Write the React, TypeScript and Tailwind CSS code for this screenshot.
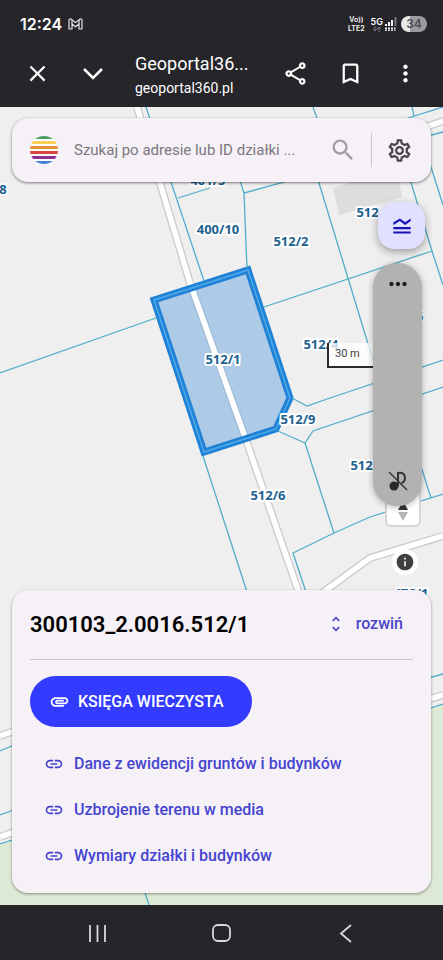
import { useState } from 'react';
import {
  MdAttachment,
  MdBookmarkBorder,
  MdClose,
  MdInfo,
  MdLegendToggle,
  MdLink,
  MdMoreHoriz,
  MdMoreVert,
  MdOutlineSettings,
  MdOutlineShare,
  MdSearch,
  MdUnfoldMore,
} from 'react-icons/md';

const boundaries = [
  '146,107 204,281',
  '178,198 210,188',
  '236,168 244,193 247,268',
  '244,193 281,183 318,171',
  '313,107 318,121 316,175 319,183 344,265 372,357 400,400 431,498',
  '412,107 414,116',
  '405,119 443,107',
  '428,136 443,132',
  '425,148 443,205',
  '405,163 432,251 443,285',
  '432,251 264,307',
  '0,373 156,318',
  '292,398 307,406 330,398 443,360',
  '278,431 305,443 313,431 443,387',
  '305,443 334,533',
  '306,592 293,553 334,533 370,517 443,494',
  '203,456 247,592',
  '425,679 443,674',
  '0,751 14,745',
  '0,815 14,810',
  '0,844 443,704',
  '144,890 149,905',
];

const roads = [
  '137,107 160,183 190,283 245,437 299,593',
  '322,593 370,558 443,536',
  '420,129 443,121',
  '0,736 14,731',
  '0,837 200,768 443,695',
];

const labels = [
  { text: '401/5', x: 208, y: 185 },
  { text: '400/10', x: 218, y: 234 },
  { text: '512/2', x: 291, y: 246 },
  { text: '512/3', x: 374, y: 217 },
  { text: '512/4', x: 321, y: 349 },
  { text: '512/1', x: 223, y: 364 },
  { text: '512/9', x: 298, y: 424 },
  { text: '512/5', x: 406, y: 321 },
  { text: '512/7', x: 368, y: 470 },
  { text: '512/6', x: 268, y: 500 },
  { text: '476/1', x: 411, y: 598 },
  { text: '8', x: 3, y: 194 },
];

const stripes = [
  { color: '#4a9d63', y: 0, h: 3 },
  { color: '#f6d154', y: 5, h: 3 },
  { color: '#e8913a', y: 10, h: 3 },
  { color: '#d94840', y: 15, h: 3 },
  { color: '#8e3296', y: 20, h: 3 },
  { color: '#4184d6', y: 25, h: 3 },
];

const links = [
  'Dane z ewidencji gruntów i budynków',
  'Uzbrojenie terenu w media',
  'Wymiary działki i budynków',
];

const ParcelMap = () => (
  <svg
    viewBox="0 107 443 798"
    preserveAspectRatio="xMidYMid slice"
    className="absolute inset-0 h-full w-full"
    aria-label="Mapa działek"
  >
    <rect x="-500" y="-500" width="2000" height="2000" fill="#efefef" />
    <polygon points="0,845 443,705 443,905 0,905" fill="#dde9d5" />
    <polygon points="333,188 396,168 402,197 339,215" fill="#dfdddb" />

    <g fill="none">
      {roads.map((points) => (
        <polyline key={points} points={points} stroke="#c9c9c9" strokeWidth="8" />
      ))}
      {roads.map((points) => (
        <polyline key={points} points={points} stroke="#ffffff" strokeWidth="5.500" />
      ))}
    </g>

    {/* selected parcel */}
    <polygon
      points="154,300 248,270 290,398 276,429 204,452"
      fill="#76acdf"
      fillOpacity="0.55"
    />
    <polyline points="190,283 245,437" fill="none" stroke="#ffffff" strokeWidth="5.500" />
    <polygon
      points="154,300 248,270 290,398 276,429 204,452"
      fill="none"
      stroke="#1f82d6"
      strokeWidth="7"
    />
    <g fill="none" stroke="#51aec9" strokeWidth="1.300">
      {boundaries.map((points) => (
        <polyline key={points} points={points} />
      ))}
      <polygon points="154,300 248,270 290,398 276,429 204,452" stroke="#4fa9ea" strokeWidth="1.500" />
    </g>

    <g
      fill="#21628f"
      stroke="#ffffff"
      strokeWidth="4"
      strokeLinejoin="round"
      paintOrder="stroke"
      textAnchor="middle"
      className="font-['Open_Sans',sans-serif] text-[13px] font-bold"
    >
      {labels.map((label) => (
        <text key={label.text} x={label.x} y={label.y}>
          {label.text}
        </text>
      ))}
    </g>
  </svg>
);

const StatusBar = () => (
  <div className="flex h-12 items-center justify-between pl-5 pr-4 text-white">
    <div className="flex items-center gap-1.5">
      <span className="font-['Inter',sans-serif] text-base font-semibold">12:24</span>
      <svg width="15" height="12" viewBox="0 0 15 12" fill="none" stroke="#e4e4e7" strokeWidth="1.200" strokeLinejoin="round">
        <path d="M1 11V2.200C1 .9 2.400.5 3.300 1.200L7.500 4.600l4.200-3.400C12.600.5 14 .9 14 2.200V11h-3V6L7.500 8.800 4 6v5z" />
        <path d="M4 6V2M11 6V2" />
      </svg>
    </div>
    <div className="flex items-center gap-1 font-['Inter',sans-serif] font-semibold">
      <div className="flex flex-col items-center text-[7px] leading-[9px]">
        <span>Vo))</span>
        <span>LTE2</span>
      </div>
      <div className="ml-0.5 flex items-center">
        <div className="flex flex-col items-center text-[9px] leading-[9px]">
          <span>5G</span>
          <svg width="10" height="6" viewBox="0 0 10 6" fill="none" stroke="#77777c" strokeWidth="1">
            <path d="M3 0v5M1 3l2 2 2-2M7 6V1M5 3l2-2 2 2" />
          </svg>
        </div>
        <svg width="14" height="14" viewBox="0 0 14 14" strokeWidth="2">
          <path d="M3 9V7M6 9V5M9 9V3" stroke="#f4f4f5" />
          <path d="M12.500 9V0" stroke="#77777c" />
          <path d="M2 11.500h10.500" stroke="#f4f4f5" strokeDasharray="2 1" />
          <path d="M2 13.500h10.500" stroke="#d4d4d8" strokeWidth="1" strokeDasharray="2 1" />
        </svg>
      </div>
      <span className="flex h-4 w-[26px] items-center justify-center rounded-full bg-linear-to-r from-[#e9e9eb] from-35% to-[#9b9b9f] to-35% text-xs text-[#4c4c50]">
        34
      </span>
    </div>
  </div>
);

const BrowserBar = () => (
  <div className="flex h-[59px] items-start text-white">
    <button aria-label="Zamknij" className="ml-6 mt-3">
      <MdClose size={27} />
    </button>
    <button aria-label="Zwiń" className="ml-8 mt-5">
      <svg width="20" height="12" viewBox="0 0 20 12" fill="none" stroke="currentColor" strokeWidth="2.500">
        <path d="M1 1l9 9 9-9" />
      </svg>
    </button>
    <div className="ml-8 mt-1 min-w-0 flex-1 font-['Roboto',sans-serif]">
      <div className="text-lg leading-6">Geoportal36...</div>
      <div className="text-sm leading-6">geoportal360.pl</div>
    </div>
    <div className="mr-6 mt-3 flex items-center gap-7">
      <button aria-label="Udostępnij">
        <MdOutlineShare size={27} />
      </button>
      <button aria-label="Dodaj zakładkę">
        <MdBookmarkBorder size={27} />
      </button>
      <button aria-label="Więcej">
        <MdMoreVert size={27} />
      </button>
    </div>
  </div>
);

const SearchBar = () => {
  const [query, setQuery] = useState('');

  return (
    <div className="relative flex h-16 items-center rounded-2xl bg-[#f5f1f7] pl-4 pr-[18px] shadow-[0_1px_3px_rgba(0,0,0,0.5)]">
      <svg width="32" height="32" viewBox="-2 -2 32 32" className="shrink-0">
        <clipPath id="logo-circle">
          <circle cx="14" cy="14" r="14" />
        </clipPath>
        <circle cx="14" cy="14" r="14" fill="#ffffff" />
        <g clipPath="url(#logo-circle)">
          {stripes.map((stripe) => (
            <rect key={stripe.color} x="0" y={stripe.y} width="28" height={stripe.h} fill={stripe.color} />
          ))}
        </g>
      </svg>
      <input
        type="text"
        value={query}
        onChange={(e) => setQuery(e.target.value)}
        aria-label="Szukaj"
        placeholder="Szukaj po adresie lub ID działki ..."
        className="ml-3.5 min-w-0 flex-1 bg-transparent text-[15px] text-gray-800 outline-none placeholder:text-[#7b777d]"
      />
      <button aria-label="Szukaj" className="text-[#a09ca2]">
        <MdSearch size={28} />
      </button>
      <div className="ml-3.5 h-[34px] w-px bg-[#cbc7cd]" />
      <button aria-label="Ustawienia" className="ml-3.5 text-[#4a474c]">
        <MdOutlineSettings size={27} />
      </button>
    </div>
  );
};

const MapControls = () => (
  <div className="relative flex-1">
    <button
      aria-label="Legenda"
      className="absolute right-[6px] top-5 z-10 flex h-[47px] w-[47px] items-center justify-center rounded-2xl bg-[#e1e0ff] text-[#1810b8] shadow-[0_3px_8px_rgba(0,0,0,0.35)]"
    >
      <MdLegendToggle size={26} />
    </button>

    <div className="absolute right-[57px] top-[161px] h-[25px] w-[47px] border-b-2 border-l-2 border-[#2c292d] bg-white/75 pl-1.5 text-[11px] leading-[22px] text-[#3e3e3e]">
      30 m
    </div>

    <button
      aria-label="Obrót mapy"
      className="absolute right-[10px] top-[301px] flex h-11 w-9 items-end justify-center rounded-md border-2 border-[#d5d5d5] bg-white pb-1"
    >
      <svg width="10" height="20" viewBox="0 0 10 20">
        <path d="M5 0l5 9H0z" fill="#333333" />
        <path d="M0 11h10l-5 9z" fill="#b5b5b5" />
      </svg>
    </button>

    <div className="absolute right-[9px] top-[81px] flex h-[243px] w-[49px] flex-col items-center justify-between rounded-full bg-[#b2b2b2] pb-3.5 pt-2 text-[#1d1d1f] shadow-[0_1px_6px_rgba(0,0,0,0.3)]">
      <button aria-label="Więcej opcji">
        <MdMoreHoriz size={26} />
      </button>
      <button aria-label="Wycisz multimedia">
        <svg width="22" height="22" viewBox="0 0 22 22" fill="none" stroke="#333335" strokeWidth="2">
          <circle cx="7" cy="16" r="4.500" fill="#29292b" stroke="none" />
          <path d="M11 16V3c4-1 7 1 7 4.500s-1.500 5-3.500 5.500" />
          <path d="M2 2l18 18" strokeWidth="1.500" />
        </svg>
      </button>
    </div>

    <button
      aria-label="Informacje"
      className="absolute bottom-[15px] right-[13px] flex h-[26px] w-[26px] items-center justify-center rounded-full bg-white text-[#3f3f3f]"
    >
      <MdInfo size={20} />
    </button>
  </div>
);

const ParcelCard = () => (
  <section className="relative rounded-2xl bg-[#f5f1f7] px-[18px] pb-3.5 pt-3.5 shadow-[0_1px_3px_rgba(0,0,0,0.4)]">
    <div className="flex h-14 items-center justify-between border-b border-[#c9c5cb] pb-[15px]">
      <h1 className="text-[22px] font-semibold text-black">300103_2.0016.512/1</h1>
      <button className="mr-2.5 flex items-center gap-2.5 text-base font-medium text-[#4b45c8]">
        <MdUnfoldMore size={20} />
        rozwiń
      </button>
    </div>
    <button className="mt-4 flex h-[51px] items-center gap-2 rounded-full bg-[#333bff] pl-[19px] pr-7 text-base font-medium text-white">
      <MdAttachment size={21} />
      KSIĘGA WIECZYSTA
    </button>
    <ul className="mt-3.5 pl-3.5">
      {links.map((link) => (
        <li key={link}>
          <a href="#" className="flex h-[46px] items-center gap-2.5 text-base font-medium text-[#4644cf]">
            <MdLink size={20} />
            {link}
          </a>
        </li>
      ))}
    </ul>
  </section>
);

const NavBar = () => (
  <nav className="flex h-[55px] items-center justify-between bg-[#25252a] px-[84px] text-[#d9d9dc]">
    <button aria-label="Ostatnie">
      <svg width="26" height="20" viewBox="0 0 26 20" stroke="currentColor" strokeWidth="1.800">
        <path d="M6 2v17M13.500 2v17M21 2v17" />
      </svg>
    </button>
    <button aria-label="Ekran główny">
      <svg width="26" height="20" viewBox="0 0 26 20" fill="none" stroke="currentColor" strokeWidth="1.800">
        <rect x="4" y="2" width="17" height="16" rx="5" />
      </svg>
    </button>
    <button aria-label="Wstecz">
      <svg width="26" height="20" viewBox="0 0 26 20" fill="none" stroke="currentColor" strokeWidth="1.800">
        <path d="M18 2L8 10.500l10 8.500" />
      </svg>
    </button>
  </nav>
);

const App = () => {
  return (
    <div className="flex min-h-screen flex-col bg-[#25252a] font-['Roboto',sans-serif]">
      <header>
        <StatusBar />
        <BrowserBar />
      </header>
      <main className="relative flex flex-1 flex-col px-3 pb-3 pt-[11px]">
        <ParcelMap />
        <SearchBar />
        <MapControls />
        <ParcelCard />
      </main>
      <NavBar />
    </div>
  );
};

export default App;
